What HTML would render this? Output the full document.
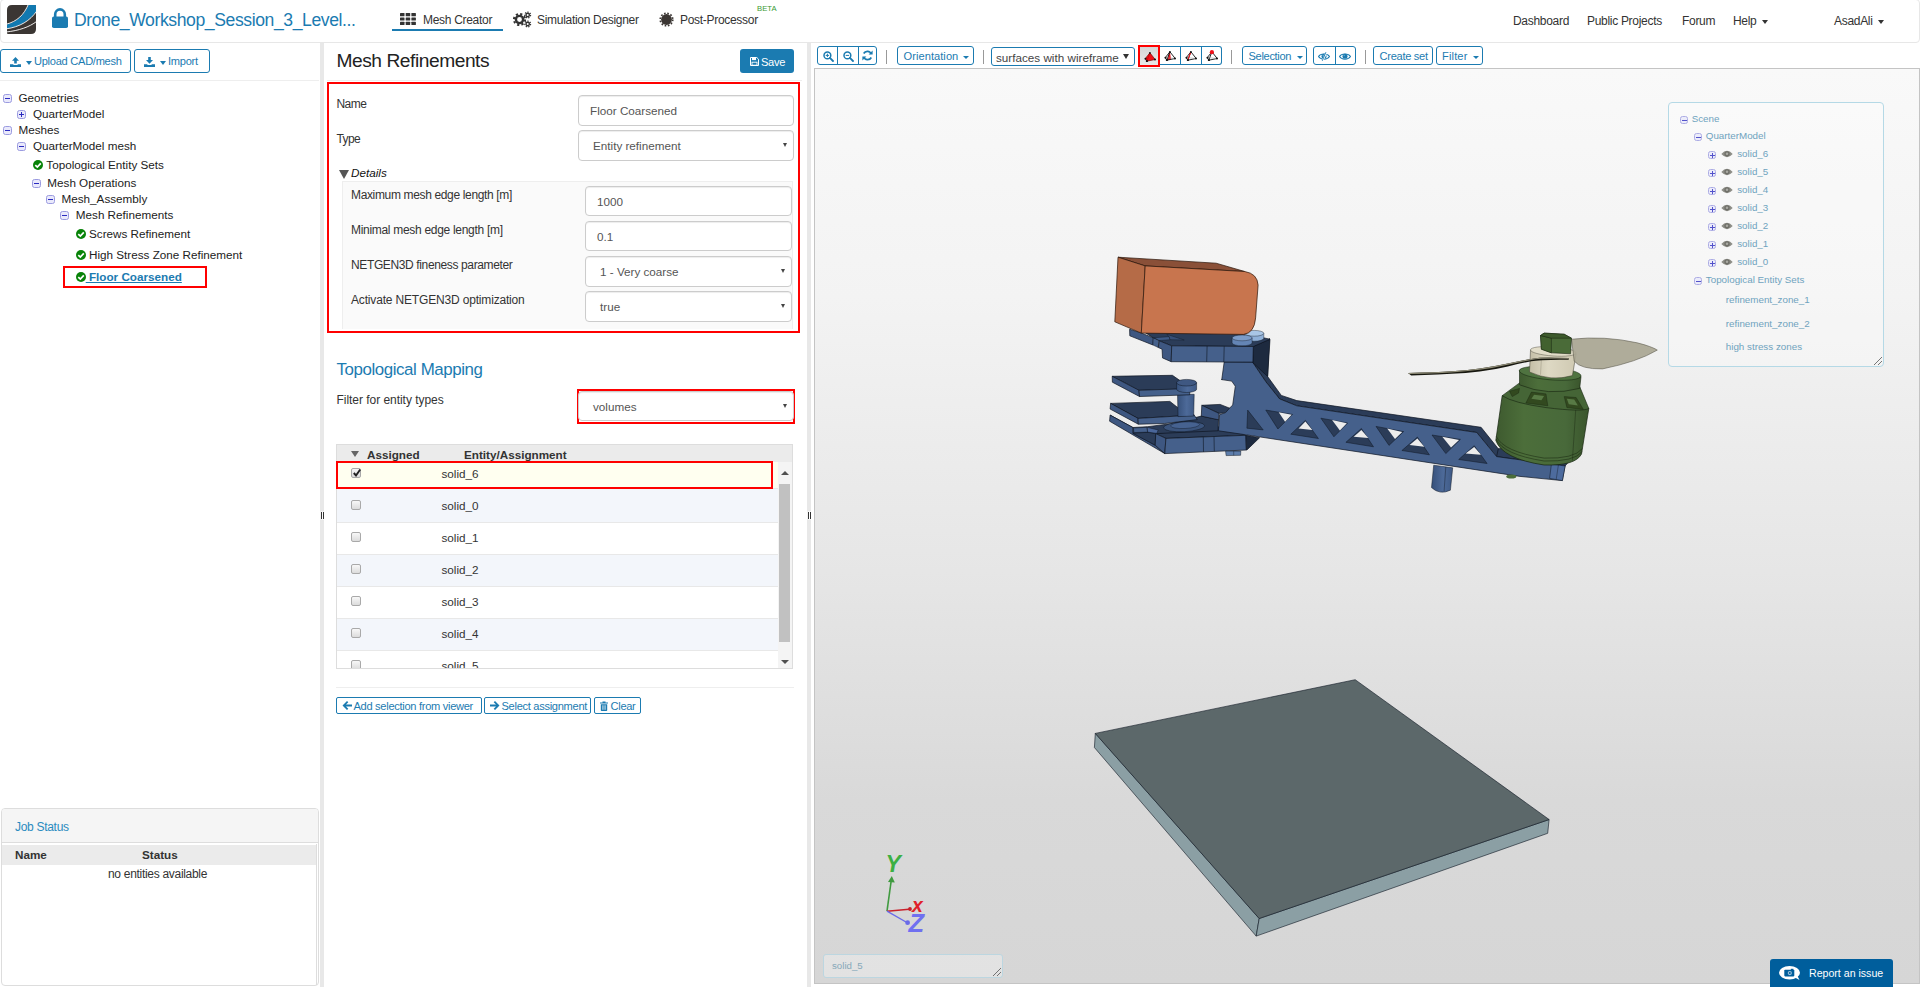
<!DOCTYPE html>
<html lang="en">
<head>
<meta charset="utf-8">
<title>Drone_Workshop_Session_3_Level - Mesh Creator</title>
<style>
*{box-sizing:border-box}
html,body{margin:0;padding:0}
body{width:1920px;height:987px;overflow:hidden;background:#fff;font-family:"Liberation Sans",sans-serif;font-size:13px;color:#333;position:relative}
.abs{position:absolute}
svg{display:block}
/* NAVBAR */
#nav{position:absolute;left:0;top:-1px;width:1920px;height:44px;background:#fff;border:1px solid #e7e7e7;border-radius:4px}
#nav .t{position:absolute;white-space:nowrap;color:#333;font-size:12px;letter-spacing:-0.3px;line-height:14px}
#nav>*{margin-left:-1px}
#title{position:absolute;left:74px;top:9px;font-size:17.6px;line-height:22px;color:#1b7bb1;white-space:nowrap;letter-spacing:-0.41px}
.caret{display:inline-block;width:0;height:0;border-left:3.5px solid transparent;border-right:3.5px solid transparent;border-top:4px solid currentColor;vertical-align:middle}
/* LEFT */
#left{position:absolute;left:0;top:43px;width:319px;height:944px;background:#fff}
.split{position:absolute;top:43px;width:4px;height:944px;background:#e8e8e8}
.split i{position:absolute;top:468.500px;height:7px;border-left:1px solid #333;border-right:1px solid #333;left:.5px;width:3.500px;background:#fff;box-shadow:0 0 0 .5px #fff}
.btn{position:absolute;border:1px solid #1b7bb1;border-radius:3px;color:#1b7bb1;background:#fff;font-size:11.1px;letter-spacing:-0.28px;white-space:nowrap;line-height:1}
.hr{position:absolute;height:1px;background:#eee}
.tree{position:absolute;font-size:11.7px;color:#222;white-space:nowrap;line-height:14px}
.tg{position:absolute;width:9px;height:9px;border:1px solid #9b9be0;border-radius:2.5px;background:#e9e9fb}
.tg:before{content:"";position:absolute;left:1px;top:3px;width:5px;height:1px;background:#2a2ac0}
.tg.p:after{content:"";position:absolute;left:3px;top:1px;width:1px;height:5px;background:#2a2ac0}
.ok{position:absolute;width:10px;height:10px;margin-left:.5px}

/* MIDDLE */
#mid{position:absolute;left:324px;top:43px;width:483px;height:944px;background:#fff}
.lab{position:absolute;font-size:12px;letter-spacing:-0.3px;color:#333;line-height:14px;white-space:nowrap}
.inp{position:absolute;border:1px solid #ccc;border-radius:4px;background:#fff;font-size:11.7px;color:#555;box-shadow:inset 0 1px 1px rgba(0,0,0,.075);white-space:nowrap}
.inp span{position:absolute;top:50%;margin-top:-6.1px;line-height:14px}
.inp b{position:absolute;right:6.200px;top:50%;margin-top:-2.500px;width:0;height:0;border-left:2.900px solid transparent;border-right:2.900px solid transparent;border-top:4.700px solid #444}
.sb{position:absolute;border:1px solid #1b7bb1;border-radius:2px;color:#1b7bb1;background:#fff;font-size:11.1px;letter-spacing:-0.3px;white-space:nowrap;line-height:16px;height:17px}
.row{position:absolute;left:13px;width:441px;height:32px;border-bottom:1px solid #e8e8e8;font-size:13px;color:#333}
.row span{position:absolute;left:104.500px;top:8px;line-height:14px;font-size:11.7px}
.cb{position:absolute;left:14px;top:9px;width:10px;height:10px;border:1px solid #a9a9a9;border-radius:2px;background:linear-gradient(#f8f8f8,#dcdcdc)}

/* VIEWER */
#tb{position:absolute;left:811px;top:43px;width:1109px;height:25px;background:#fff}
.tbb{position:absolute;top:3px;height:19px;border:1px solid #1b7bb1;border-radius:3px;background:#fff;color:#1b7bb1;font-size:11.1px;letter-spacing:-0.2px;line-height:17px;white-space:nowrap}
.tbb>span.abs:first-child{top:1px !important}
.tbb .d{position:absolute;top:0;width:1px;height:17px;background:#1b7bb1}
.pipe{position:absolute;top:6.500px;width:1px;height:14.500px;background:#999}
#cv{position:absolute;left:814px;top:68px;width:1106px;height:916px;border:1px solid #c4c4c4;background:linear-gradient(#f9f9f9 0%,#f3f3f3 25%,#e6e6e6 55%,#d9d9d9 80%,#d6d6d6 100%);overflow:hidden}
#scene{position:absolute;left:1668px;top:102px;width:216px;height:265px;border:1px solid #b5d9e6;border-radius:4px;background:rgba(255,255,255,.28)}
#scene div{position:absolute;font-size:9.8px;line-height:12px;color:#6fa3be;white-space:nowrap}
#scene .tg{opacity:.8;margin-top:1px}
.eye{position:absolute;width:12px;height:8px}
</style>
</head>
<body>

<!-- ================= NAVBAR ================= -->
<div id="nav">
  <svg class="abs" style="left:7px;top:5px" width="29" height="29" viewBox="0 0 29 29">
    <defs><clipPath id="lg"><path d="M5 0 H28 Q29 0 29 1 V24 Q29 29 24 29 H1 Q0 29 0 28 V5 Q0 0 5 0 Z"/></clipPath></defs>
    <g clip-path="url(#lg)">
      <rect width="29" height="29" fill="#3b3633"/>
      <path d="M-1 19.700 C10 17 17.500 10 21.900 -1 L30 -1 L30 5.300 C23 15.500 13 21.500 -1 23.500 Z" fill="#1179b0"/>
      <path d="M-1 19.300 C10 16.600 17.200 9.700 21.500 -1" fill="none" stroke="#fff" stroke-width=".9"/>
      <path d="M-1 23.900 C13 21.900 23 15.900 30 5.700" fill="none" stroke="#fff" stroke-width=".9"/>
      <path d="M-1 27 C12 25.600 22 22.200 30 16.200" fill="none" stroke="#fff" stroke-width=".9"/>
    </g>
  </svg>
  <svg class="abs" style="left:51px;top:8px" width="18" height="21" viewBox="0 0 18 21">
    <path d="M4.200 9 V6.200 A4.800 4.800 0 0 1 13.800 6.200 V9" fill="none" stroke="#1b7bb1" stroke-width="2.600"/>
    <rect x="1" y="8.500" width="16" height="11.500" rx="1.800" fill="#1b7bb1"/>
  </svg>
  <div id="title">Drone_Workshop_Session_3_Level...</div>

  <!-- workflow tabs -->
  <svg class="abs" style="left:400px;top:13px" width="16" height="12" viewBox="0 0 16 12" fill="#333">
    <rect x="0" y="0" width="4.500" height="3.200" rx=".5"/><rect x="5.700" y="0" width="4.500" height="3.200" rx=".5"/><rect x="11.400" y="0" width="4.500" height="3.200" rx=".5"/>
    <rect x="0" y="4.400" width="4.500" height="3.200" rx=".5"/><rect x="5.700" y="4.400" width="4.500" height="3.200" rx=".5"/><rect x="11.400" y="4.400" width="4.500" height="3.200" rx=".5"/>
    <rect x="0" y="8.800" width="4.500" height="3.200" rx=".5"/><rect x="5.700" y="8.800" width="4.500" height="3.200" rx=".5"/><rect x="11.400" y="8.800" width="4.500" height="3.200" rx=".5"/>
  </svg>
  <div class="t" style="left:423px;top:13px">Mesh Creator</div>
  <div class="abs" style="left:392px;top:29px;width:111px;height:2px;background:#1b7bb1"></div>

  <svg class="abs" style="left:513px;top:11px" width="19" height="17" viewBox="0 0 19 17">
    <g fill="none" stroke="#333">
      <circle cx="6.500" cy="8.500" r="3.600" stroke-width="2.400"/>
      <circle cx="6.500" cy="8.500" r="5.600" stroke-width="2" stroke-dasharray="2.200 2.200"/>
      <circle cx="14.700" cy="4" r="1.700" stroke-width="1.400"/>
      <circle cx="14.700" cy="4" r="2.900" stroke-width="1.200" stroke-dasharray="1.300 1.300"/>
      <circle cx="14.700" cy="13" r="1.700" stroke-width="1.400"/>
      <circle cx="14.700" cy="13" r="2.900" stroke-width="1.200" stroke-dasharray="1.300 1.300"/>
    </g>
  </svg>
  <div class="t" style="left:537px;top:13px">Simulation Designer</div>

  <svg class="abs" style="left:659px;top:12px" width="15" height="15" viewBox="0 0 15 15">
    <circle cx="7.500" cy="7.500" r="5.400" fill="#3b3633"/>
    <circle cx="7.500" cy="7.500" r="6.300" fill="none" stroke="#3b3633" stroke-width="1.600" stroke-dasharray="1.650 1.650"/>
  </svg>
  <div class="t" style="left:680px;top:13px">Post-Processor</div>
  <div class="abs" style="left:757px;top:4px;font-size:7.7px;line-height:9px;color:#3a9a33;letter-spacing:0">BETA</div>

  <div class="t" style="left:1513px;top:14px">Dashboard</div>
  <div class="t" style="left:1587px;top:14px">Public Projects</div>
  <div class="t" style="left:1682px;top:14px">Forum</div>
  <div class="t" style="left:1733px;top:14px">Help <span class="caret" style="margin-left:2px"></span></div>
  <div class="t" style="left:1834px;top:14px">AsadAli <span class="caret" style="margin-left:2px"></span></div>
</div>

<!-- ================= LEFT PANEL ================= -->
<div id="left">
  <div class="btn" style="left:0;top:6px;width:131px;height:24px">
    <svg class="abs" style="left:9px;top:7px" width="11" height="10" viewBox="0 0 11 10" fill="#1b7bb1"><path d="M5.500 0 L9 3.800 H6.800 V6.500 H4.200 V3.800 H2 Z"/><path d="M0 7.200 H3.400 V8 H7.600 V7.200 H11 V10 H0 Z"/></svg>
    <span class="caret abs" style="left:25px;top:11px"></span>
    <span class="abs" style="left:33px;top:6px">Upload CAD/mesh</span>
  </div>
  <div class="btn" style="left:134px;top:6px;width:76px;height:24px">
    <svg class="abs" style="left:9px;top:7px" width="11" height="10" viewBox="0 0 11 10" fill="#1b7bb1"><path d="M5.500 6.800 L9 3 H6.800 V0 H4.200 V3 H2 Z"/><path d="M0 7.200 H3.400 V8 H7.600 V7.200 H11 V10 H0 Z"/></svg>
    <span class="caret abs" style="left:25px;top:11px"></span>
    <span class="abs" style="left:33px;top:6px">Import</span>
  </div>
  <div class="hr" style="left:0;top:37px;width:319px"></div>
  <span class="tg" style="left:3px;top:50.5px"></span>
  <div class="tree" style="left:18.5px;top:48.0px">Geometries</div>
  <span class="tg p" style="left:17px;top:66.5px"></span>
  <div class="tree" style="left:33px;top:64.0px">QuarterModel</div>
  <span class="tg" style="left:3px;top:82.5px"></span>
  <div class="tree" style="left:18.5px;top:80.0px">Meshes</div>
  <span class="tg" style="left:17px;top:98.5px"></span>
  <div class="tree" style="left:33px;top:96.0px">QuarterModel mesh</div>
  <svg class="ok" style="left:32px;top:117.0px" viewBox="0 0 10 10"><circle cx="5" cy="5" r="5" fill="#088308"/><path d="M2.300 5.200 L4.300 7.100 L7.800 3.300" fill="none" stroke="#fff" stroke-width="1.700"/></svg>
  <div class="tree" style="left:46.3px;top:115.0px">Topological Entity Sets</div>
  <span class="tg" style="left:32px;top:135.5px"></span>
  <div class="tree" style="left:47.3px;top:133.0px">Mesh Operations</div>
  <span class="tg" style="left:46px;top:151.5px"></span>
  <div class="tree" style="left:61.5px;top:149.0px">Mesh_Assembly</div>
  <span class="tg" style="left:60px;top:167.5px"></span>
  <div class="tree" style="left:75.8px;top:165.0px">Mesh Refinements</div>
  <svg class="ok" style="left:75px;top:186.0px" viewBox="0 0 10 10"><circle cx="5" cy="5" r="5" fill="#088308"/><path d="M2.300 5.200 L4.300 7.100 L7.800 3.300" fill="none" stroke="#fff" stroke-width="1.700"/></svg>
  <div class="tree" style="left:89px;top:184.0px">Screws Refinement</div>
  <svg class="ok" style="left:75px;top:207.0px" viewBox="0 0 10 10"><circle cx="5" cy="5" r="5" fill="#088308"/><path d="M2.300 5.200 L4.300 7.100 L7.800 3.300" fill="none" stroke="#fff" stroke-width="1.700"/></svg>
  <div class="tree" style="left:89px;top:205.0px">High Stress Zone Refinement</div>
  <svg class="ok" style="left:75px;top:229.0px" viewBox="0 0 10 10"><circle cx="5" cy="5" r="5" fill="#088308"/><path d="M2.300 5.200 L4.300 7.100 L7.800 3.300" fill="none" stroke="#fff" stroke-width="1.700"/></svg>
  <div class="abs" style="left:63px;top:223px;width:144px;height:22px;border:2px solid #f00"></div>
  <div class="tree" style="left:85.7px;top:227.0px;font-weight:bold;color:#1b7bb1;text-decoration:underline">&nbsp;Floor Coarsened</div>
  <!-- Job status -->
  <div class="abs" style="left:1px;top:765px;width:318px;height:178px;border:1px solid #ddd;border-radius:4px;background:#fff"></div>
  <div class="abs" style="left:2px;top:766px;width:316px;height:34px;background:#f5f5f5;border-bottom:1px solid #ddd;border-radius:3px 3px 0 0"></div>
  <div class="abs" style="left:15px;top:777px;font-size:12px;letter-spacing:-0.3px;color:#2a8bc0;line-height:14px">Job Status</div>
  <div class="abs" style="left:2px;top:802px;width:315px;height:20px;background:#ebebeb"></div>
  <div class="abs" style="left:316px;top:801px;width:1px;height:141px;background:#ddd"></div>
  <div class="abs" style="left:15px;top:804.500px;font-size:11.7px;font-weight:bold;color:#333;line-height:14px">Name</div>
  <div class="abs" style="left:142px;top:804.500px;font-size:11.7px;font-weight:bold;color:#333;line-height:14px">Status</div>
  <div class="abs" style="left:108px;top:824px;font-size:12px;letter-spacing:-0.3px;color:#333;line-height:14px;white-space:nowrap">no entities available</div>
</div>

<!-- ================= MIDDLE PANEL ================= -->
<div id="mid">
  <div class="abs" style="left:12.500px;top:6px;font-size:19.2px;letter-spacing:-0.46px;line-height:24px;color:#222;white-space:nowrap">Mesh Refinements</div>
  <div class="abs" style="left:416px;top:6px;width:54px;height:24px;background:#1b7bb1;border-radius:3px;color:#fff;font-size:11.1px;letter-spacing:-0.28px;line-height:14px">
    <svg class="abs" style="left:10px;top:8px" width="9" height="9" viewBox="0 0 9 9"><path d="M.5 .5 H6.800 L8.500 2.200 V8.500 H.5 Z" fill="none" stroke="#fff" stroke-width="1"/><rect x="2" y=".5" width="4" height="2.600" fill="#fff"/><rect x="2" y="5.200" width="5" height="3" fill="none" stroke="#fff" stroke-width=".9"/></svg>
    <span class="abs" style="left:21px;top:5.500px">Save</span>
  </div>
  <div class="hr" style="left:3px;top:37px;width:475px"></div>

  <!-- red highlighted form -->
  <div class="abs" style="left:3px;top:39px;width:473px;height:251px;border:2px solid #f00"></div>
  <div class="lab" style="left:12.500px;top:54px;letter-spacing:-.55px">Name</div>
  <div class="inp" style="left:254px;top:52px;width:216px;height:31px"><span style="left:11px">Floor Coarsened</span></div>
  <div class="lab" style="left:12.500px;top:89px;letter-spacing:-.6px">Type</div>
  <div class="inp" style="left:254px;top:87px;width:216px;height:31px"><span style="left:14px">Entity refinement</span><b></b></div>

  <div class="abs" style="left:14.500px;top:126.500px;width:0;height:0;border-left:5.500px solid transparent;border-right:5.500px solid transparent;border-top:9px solid #555"></div>
  <div class="abs" style="left:27px;top:123px;font-size:11.7px;font-style:italic;color:#111;line-height:14px">Details</div>
  <div class="abs" style="left:18px;top:138px;width:451px;height:148px;background:#fafafa;border:1px solid #eee;border-bottom:none"></div>

  <div class="lab" style="left:27px;top:145px;letter-spacing:-.35px">Maximum mesh edge length [m]</div>
  <div class="inp" style="left:261px;top:143px;width:207px;height:30px"><span style="left:11px">1000</span></div>
  <div class="lab" style="left:27px;top:180px">Minimal mesh edge length [m]</div>
  <div class="inp" style="left:261px;top:178px;width:207px;height:30px"><span style="left:11px">0.1</span></div>
  <div class="lab" style="left:27px;top:215px;letter-spacing:-.37px">NETGEN3D fineness parameter</div>
  <div class="inp" style="left:261px;top:213px;width:207px;height:31px"><span style="left:14px">1 - Very coarse</span><b></b></div>
  <div class="lab" style="left:27px;top:250px;letter-spacing:-.17px">Activate NETGEN3D optimization</div>
  <div class="inp" style="left:261px;top:248px;width:207px;height:31px"><span style="left:14px">true</span><b></b></div>

  <!-- Topological mapping -->
  <div class="abs" style="left:12.500px;top:316px;font-size:16.9px;letter-spacing:-0.42px;line-height:22px;color:#1b7bb1;white-space:nowrap">Topological Mapping</div>
  <div class="lab" style="left:12.500px;top:350px;letter-spacing:-.04px">Filter for entity types</div>
  <div class="abs" style="left:253px;top:346px;width:218px;height:35px;border:2px solid #f00"></div>
  <div class="inp" style="left:254px;top:348px;width:216px;height:30px"><span style="left:14px">volumes</span><b></b></div>

  <!-- table -->
  <div class="abs" style="left:12px;top:401px;width:457px;height:225px;border:1px solid #ddd;background:#fff;overflow:hidden">
    <div class="abs" style="left:0;top:0;width:455px;height:17px;background:#ebebeb"></div>
    <div class="abs" style="left:14px;top:6px;width:0;height:0;border-left:4px solid transparent;border-right:4px solid transparent;border-top:6px solid #666"></div>
    <div class="abs" style="left:30px;top:3.200px;font-size:11.7px;font-weight:bold;line-height:14px;color:#333">Assigned</div>
    <div class="abs" style="left:127px;top:3.200px;font-size:11.7px;font-weight:bold;line-height:14px;color:#333">Entity/Assignment</div>
    <div class="abs" style="left:0;top:17px;width:441px;height:207px;overflow:hidden">
      <div class="row" style="left:0;top:0;height:27px;background:#fffff0"><i class="cb" style="top:6px"><svg class="abs" style="left:0;top:-1px" width="10" height="10" viewBox="0 0 10 10"><path d="M1.800 5 L4 7.500 L8.200 1.500" fill="none" stroke="#222" stroke-width="1.900"/></svg></i><span style="top:4.500px">solid_6</span></div>
      <div class="row" style="left:0;top:27px;height:34px;background:#f3f6fb"><i class="cb" style="top:11px"></i><span style="top:10px">solid_0</span></div>
      <div class="row" style="left:0;top:61px;background:#fff"><i class="cb"></i><span>solid_1</span></div>
      <div class="row" style="left:0;top:93px;background:#f3f6fb"><i class="cb"></i><span>solid_2</span></div>
      <div class="row" style="left:0;top:125px;background:#fff"><i class="cb"></i><span>solid_3</span></div>
      <div class="row" style="left:0;top:157px;background:#f3f6fb"><i class="cb"></i><span>solid_4</span></div>
      <div class="row" style="left:0;top:189px;background:#fff"><i class="cb"></i><span>solid_5</span></div>
    </div>
    <!-- scrollbar -->
    <div class="abs" style="left:441px;top:17px;width:14px;height:207px;background:#f4f4f4"></div>
    <div class="abs" style="left:442px;top:38.500px;width:11px;height:158px;background:#c1c1c1"></div>
    <div class="abs" style="left:443.500px;top:26px;width:0;height:0;border-left:4px solid transparent;border-right:4px solid transparent;border-bottom:4.500px solid #505050"></div>
    <div class="abs" style="left:443.500px;top:215px;width:0;height:0;border-left:4px solid transparent;border-right:4px solid transparent;border-top:4.500px solid #505050"></div>
  </div>
  <div class="abs" style="left:12px;top:418px;width:437px;height:28px;border:2px solid #f00"></div>

  <div class="hr" style="left:12px;top:644px;width:458px"></div>
  <div class="sb" style="left:12px;top:654px;width:146px">
    <svg class="abs" style="left:5px;top:3px" width="10" height="9" viewBox="0 0 10 9"><path d="M5 0 L6.300 1.300 L4 3.600 H10 V5.400 H4 L6.300 7.700 L5 9 L.5 4.500 Z" fill="#1b7bb1"/></svg>
    <span class="abs" style="left:16.500px;top:0">Add selection from viewer</span></div>
  <div class="sb" style="left:160px;top:654px;width:107px">
    <svg class="abs" style="left:5px;top:3px" width="10" height="9" viewBox="0 0 10 9"><path d="M5 0 L3.700 1.300 L6 3.600 H0 V5.400 H6 L3.700 7.700 L5 9 L9.500 4.500 Z" fill="#1b7bb1"/></svg>
    <span class="abs" style="left:16.500px;top:0">Select assignment</span></div>
  <div class="sb" style="left:270px;top:654px;width:47px">
    <svg class="abs" style="left:5px;top:2.500px" width="8" height="10" viewBox="0 0 8 10"><path d="M0 1.500 H2.500 V.5 H5.500 V1.500 H8 V2.600 H0 Z M.8 3.200 H7.200 V9.200 Q7.200 10 6.400 10 H1.600 Q.8 10 .8 9.200 Z" fill="#1b7bb1"/><path d="M2.700 4.300 V8.800 M4 4.300 V8.800 M5.300 4.300 V8.800" stroke="#fff" stroke-width=".6"/></svg>
    <span class="abs" style="left:15.500px;top:0">Clear</span></div>
</div>

<!-- ================= VIEWER ================= -->
<div id="tb">
  <div class="tbb" style="left:6px;width:60px">
    <div class="abs" style="left:0;top:0;width:19px;height:17px"><svg class="abs" style="left:4.500px;top:3.500px" width="11" height="11" viewBox="0 0 11 11"><circle cx="4.400" cy="4.400" r="3.400" fill="none" stroke="#1b7bb1" stroke-width="1.500"/><path d="M6.900 6.900 L10 10" stroke="#1b7bb1" stroke-width="1.800" stroke-linecap="round"/><path d="M2.700 4.400 H6.100 M4.400 2.700 V6.100" stroke="#1b7bb1" stroke-width="1"/></svg></div>
    <div class="d" style="left:19px"></div>
    <div class="abs" style="left:20px;top:0;width:19px;height:17px"><svg class="abs" style="left:4.500px;top:3.500px" width="11" height="11" viewBox="0 0 11 11"><circle cx="4.400" cy="4.400" r="3.400" fill="none" stroke="#1b7bb1" stroke-width="1.500"/><path d="M6.900 6.900 L10 10" stroke="#1b7bb1" stroke-width="1.800" stroke-linecap="round"/><path d="M2.700 4.400 H6.100" stroke="#1b7bb1" stroke-width="1"/></svg></div>
    <div class="d" style="left:39.500px"></div>
    <svg class="abs" style="left:44px;top:3px" width="11" height="11" viewBox="0 0 11 11"><path d="M9.300 4 A4.200 4.200 0 0 0 1.700 3.500" fill="none" stroke="#1b7bb1" stroke-width="1.700"/><path d="M10.600 .6 V4.600 H6.600 Z" fill="#1b7bb1"/><path d="M1.700 7 A4.200 4.200 0 0 0 9.300 7.500" fill="none" stroke="#1b7bb1" stroke-width="1.700"/><path d="M.4 10.400 V6.400 H4.400 Z" fill="#1b7bb1"/></svg>
  </div>
  <div class="pipe" style="left:75px"></div>
  <div class="tbb" style="left:86px;width:77px"><span class="abs" style="left:5.500px;top:0;letter-spacing:.05px">Orientation</span><span class="caret abs" style="left:65px;top:9px;border-left-width:3px;border-right-width:3px;border-top-width:3.500px"></span></div>
  <div class="pipe" style="left:172px"></div>
  <div class="tbb" style="left:180px;top:4px;width:144px;color:#444;font-size:11.7px;letter-spacing:0;line-height:17px"><span class="abs" style="left:4px;top:0.500px">surfaces with wireframe</span><span class="abs" style="left:131px;top:6px;width:0;height:0;border-left:3px solid transparent;border-right:3px solid transparent;border-top:5px solid #333"></span></div>
  <div class="tbb" style="left:349px;width:62px;border-radius:0 3px 3px 0;border-left:none">
    <div class="d" style="left:20px"></div><div class="d" style="left:41px"></div>
    <svg class="abs" style="left:4px;top:3px" width="12" height="11" viewBox="0 0 12 11"><path d="M5.900 1.800 L2.800 10.200 L7 9.400 Z" fill="#f01018"/><path d="M5.900 1.800 L1.300 7.600 L2.800 10.200 L11.200 8.500 Z M5.900 1.800 L2.800 10.200" fill="none" stroke="#111" stroke-width=".9" stroke-linejoin="round"/><path d="M1.300 7.600 L11.200 8.500" stroke="#999" stroke-width=".5"/><circle cx="5.900" cy="1.900" r=".9" fill="#111"/><circle cx="1.500" cy="7.700" r="1" fill="#111"/><circle cx="2.900" cy="10" r="1.100" fill="#111"/><circle cx="11" cy="8.500" r="1" fill="#111"/></svg>
    <svg class="abs" style="left:25px;top:3px" width="12" height="11" viewBox="0 0 12 11"><path d="M5.900 1.800 L1.300 7.600 L2.800 10.200 L11.200 8.500 Z M5.900 1.800 L2.800 10.200" fill="none" stroke="#111" stroke-width=".9" stroke-linejoin="round"/><path d="M1.300 7.600 L11.200 8.500" stroke="#999" stroke-width=".5"/><path d="M5.600 2.600 L3 9.600" stroke="#f01018" stroke-width="1.100"/><circle cx="5.900" cy="1.900" r=".9" fill="#111"/><circle cx="1.500" cy="7.700" r="1" fill="#111"/><circle cx="2.900" cy="10" r="1.100" fill="#111"/><circle cx="11" cy="8.500" r="1" fill="#111"/></svg>
    <svg class="abs" style="left:46px;top:3px" width="12" height="11" viewBox="0 0 12 11"><path d="M5.900 1.800 L1.300 7.600 L2.800 10.200 L11.200 8.500 Z M5.900 1.800 L2.800 10.200" fill="none" stroke="#111" stroke-width=".9" stroke-linejoin="round"/><path d="M1.300 7.600 L11.200 8.500" stroke="#999" stroke-width=".5"/><circle cx="5.900" cy="1.900" r=".9" fill="#111"/><circle cx="1.500" cy="7.700" r="1" fill="#111"/><circle cx="2.900" cy="10" r="1.100" fill="#111"/><circle cx="11" cy="8.500" r="1" fill="#111"/><circle cx="5.900" cy="2.200" r="2.100" fill="#f01018"/></svg>
  </div>
  <div class="abs" style="left:327px;top:2px;width:22px;height:22px;border:2px solid #f00;background:linear-gradient(#d6d6d6,#e9e9e9)"><svg class="abs" style="left:3.500px;top:4px" width="12" height="11" viewBox="0 0 12 11"><path d="M5.900 1.800 L1.300 7.600 L2.800 10.200 L11.200 8.500 Z" fill="#f01018"/><path d="M5.900 1.800 L1.300 7.600 L2.800 10.200 L11.200 8.500 Z" fill="none" stroke="#7a0a0a" stroke-width=".7" stroke-linejoin="round"/><path d="M5.900 1.800 L2.800 10.200" stroke="#a00" stroke-width=".5"/><circle cx="5.900" cy="1.900" r=".9" fill="#111"/><circle cx="1.500" cy="7.700" r="1" fill="#111"/><circle cx="2.900" cy="10" r="1.100" fill="#111"/><circle cx="11" cy="8.500" r="1" fill="#111"/></svg></div>
  <div class="pipe" style="left:420px"></div>
  <div class="tbb" style="left:431px;width:65px"><span class="abs" style="left:5.500px;top:0;letter-spacing:-.33px">Selection</span><span class="caret abs" style="left:54px;top:9px;border-left-width:3px;border-right-width:3px;border-top-width:3.500px"></span></div>
  <div class="tbb" style="left:502px;width:43px">
    <div class="abs" style="left:0;top:0;width:21px;height:17px"><svg class="abs" style="left:3.500px;top:4.500px" width="12" height="9" viewBox="0 0 12 9"><path d="M.5 4.600 C2.500 1.200 9.500 1.200 11.500 4.600 C9.500 8 2.500 8 .5 4.600 Z" fill="#fff" stroke="#1b7bb1" stroke-width="1.050"/><circle cx="6" cy="4.300" r="2.500" fill="#1b7bb1"/><circle cx="5.200" cy="3.500" r=".8" fill="#5ea4cc"/><path d="M8.600 -.2 L4.400 9.200" stroke="#fff" stroke-width="1.700"/><path d="M7.900 .2 L4.300 8.800" stroke="#1b7bb1" stroke-width=".9"/></svg></div>
    <div class="d" style="left:20.500px"></div>
    <div class="abs" style="left:21px;top:0;width:21px;height:17px"><svg class="abs" style="left:3.500px;top:4.500px" width="12" height="9" viewBox="0 0 12 9"><path d="M.5 4.600 C2.500 1.200 9.500 1.200 11.500 4.600 C9.500 8 2.500 8 .5 4.600 Z" fill="#fff" stroke="#1b7bb1" stroke-width="1.050"/><circle cx="6" cy="4.300" r="2.500" fill="#1b7bb1"/><circle cx="5.200" cy="3.500" r=".8" fill="#5ea4cc"/></svg></div>
  </div>
  <div class="pipe" style="left:554px"></div>
  <div class="tbb" style="left:562px;width:60px"><span class="abs" style="left:5.500px;top:0;letter-spacing:-.29px">Create set</span></div>
  <div class="tbb" style="left:625px;width:47px"><span class="abs" style="left:5px;top:0;letter-spacing:.14px">Filter</span><span class="caret abs" style="left:35.500px;top:9px;border-left-width:3px;border-right-width:3px;border-top-width:3.500px"></span></div>
</div>
<div id="cv">
<!--MODEL-START-->
<svg class="abs" style="left:-815px;top:-69px" width="1920" height="987" viewBox="0 0 1920 987">
<polygon points="1095.3,733.4 1259.2,918.5 1256.2,936.1 1094.4,747.5" fill="#8b9fa4" stroke="#0e1622" stroke-width="0.6" stroke-linejoin="round" />
<polygon points="1259.2,918.5 1549.1,819.5 1547.7,833.3 1256.2,936.1" fill="#8b9fa4" stroke="#0e1622" stroke-width="0.6" stroke-linejoin="round" />
<polygon points="1095.3,733.4 1355.2,679.7 1549.1,819.5 1259.2,918.5" fill="#5c686a" stroke="#0e1622" stroke-width="0.6" stroke-linejoin="round" />
<defs><linearGradient id="cyl" x1="0" x2="1"><stop offset="0" stop-color="#36507a"/><stop offset=".55" stop-color="#4d6a99"/><stop offset="1" stop-color="#3e5985"/></linearGradient></defs>
<polygon points="1155.7,433.6 1217.5,426.7 1231.7,429.8 1245.9,435.3 1165.9,438.4" fill="#2b3c58" stroke="#0e1622" stroke-width="0.7" stroke-linejoin="round" />
<polygon points="1110.1,415.1 1132.9,427.5 1147.6,426.7 1170.9,423.7 1201.3,416.1 1218.5,419.6 1218.0,430.8 1155.7,433.6 1155.2,445.2 1132.9,433.3" fill="#2b3c58" stroke="#0e1622" stroke-width="0.7" stroke-linejoin="round" />
<polygon points="1110.1,415.1 1132.9,427.5 1132.9,433.3 1155.2,445.2 1164.8,453.6 1109.6,421.2" fill="#3e5781" stroke="#0e1622" stroke-width="0.7" stroke-linejoin="round" />
<polygon points="1132.9,433.3 1147.6,432.3 1155.7,433.6 1155.2,445.2" fill="#2b3c58" stroke="#0e1622" stroke-width="0.5" stroke-linejoin="round" />
<polygon points="1133.4,428.0 1147.1,427.3 1147.6,432.1 1133.9,432.6" fill="#45608b" stroke="#0e1622" stroke-width="0.5" stroke-linejoin="round" />
<polygon points="1147.1,427.3 1158.3,430.0 1156.7,433.4 1147.6,432.1" fill="#4a669a" stroke="#0e1622" stroke-width="0.5" stroke-linejoin="round" />
<polygon points="1155.7,433.6 1165.9,438.4 1164.8,453.6 1155.2,445.2" fill="#3e5781" stroke="#0e1622" stroke-width="0.7" stroke-linejoin="round" />
<polygon points="1165.9,438.4 1245.9,435.3 1246.4,450.0 1164.8,453.6" fill="#45608b" stroke="#0e1622" stroke-width="0.7" stroke-linejoin="round" />
<polygon points="1245.9,435.3 1259.6,437.7 1246.9,450.0 1246.4,450.0" fill="#1d2a3f" stroke="#0e1622" stroke-width="0.7" stroke-linejoin="round" />
<polyline points="1203.3,437.1 1203.5,451.9" fill="none" stroke="#0e1622" stroke-width="0.6"/>
<polyline points="1214.0,436.7 1214.3,451.4" fill="none" stroke="#0e1622" stroke-width="0.6"/>
<ellipse cx="1184.1" cy="426.7" rx="20.500" ry="5" fill="#3b547c" stroke="#0e1622" stroke-width=".5" transform="rotate(-3 1184.1 426.7)"/>
<ellipse cx="1185.1" cy="425.2" rx="14.500" ry="3.300" fill="#466290" stroke="#0e1622" stroke-width=".4" transform="rotate(-3 1185.1 425.2)"/>
<polygon points="1225.6,451.1 1240.8,451.1 1240.6,455.3 1226.1,455.6" fill="#5d7dab" stroke="#0e1622" stroke-width="0.5" stroke-linejoin="round" />
<polyline points="1233.7,451.1 1233.7,455.4" fill="none" stroke="#0e1622" stroke-width="0.4"/>
<polygon points="1201.8,405.3 1220.1,404.4 1231.7,409.0 1225.6,412.6 1219.0,413.4" fill="#2b3c58" stroke="#0e1622" stroke-width="0.7" stroke-linejoin="round" />
<polygon points="1201.8,405.3 1219.0,413.4 1218.5,419.8 1201.3,416.1" fill="#3e5781" stroke="#0e1622" stroke-width="0.7" stroke-linejoin="round" />
<polygon points="1110.6,403.4 1169.9,401.4 1177.0,407.0 1194.2,415.1 1138.0,418.4" fill="#2b3c58" stroke="#0e1622" stroke-width="0.7" stroke-linejoin="round" />
<polygon points="1110.6,403.4 1138.0,418.4 1138.3,424.2 1110.1,409.0" fill="#3e5781" stroke="#0e1622" stroke-width="0.7" stroke-linejoin="round" />
<polygon points="1138.0,418.4 1194.2,415.1 1197.3,419.6 1164.8,423.5 1138.3,424.2" fill="#45608b" stroke="#0e1622" stroke-width="0.7" stroke-linejoin="round" />
<polygon points="1177.5,394.3 1194.2,394.3 1193.7,416.1 1178.0,416.6" fill="url(#cyl)" stroke="#0e1622" stroke-width="0.5" stroke-linejoin="round" />
<polygon points="1112.2,376.3 1172.4,375.3 1180.0,380.6 1177.5,389.3 1139.0,390.3" fill="#2b3c58" stroke="#0e1622" stroke-width="0.7" stroke-linejoin="round" />
<polygon points="1112.2,376.3 1139.0,390.3 1139.5,396.5 1112.4,382.2" fill="#3e5781" stroke="#0e1622" stroke-width="0.7" stroke-linejoin="round" />
<polygon points="1139.0,390.3 1189.7,388.5 1189.7,394.8 1139.5,396.5" fill="#45608b" stroke="#0e1622" stroke-width="0.7" stroke-linejoin="round" />
<path d="M1176.6,382.7 v6.500 a10,3.300 0 0 0 20,0 v-6.500 Z" fill="url(#cyl)" stroke="#0e1622" stroke-width=".5"/>
<ellipse cx="1186.6" cy="382.7" rx="10" ry="3.300" fill="#3f5882" stroke="#0e1622" stroke-width=".5"/>
<polygon points="1269.3,338.6 1267.6,376.5 1281.3,395.4 1296.8,400.6 1481.1,427.3 1498.3,448.8 1509.5,458.7 1496.6,456.6 1476.8,432.5 1296.8,405.8 1279.6,398.9 1265.8,381.7 1252.9,362.7 1253.3,346.5 1270.0,339.2" fill="#2b3c58" stroke="#0e1622" stroke-width="0.7" stroke-linejoin="round" />
<polygon points="1498.3,448.8 1496.6,456.6 1565.1,466.0 1569.7,460.5 1509.5,447.7" fill="#2b3c58" stroke="#0e1622" stroke-width="0.7" stroke-linejoin="round" />
<polygon points="1224.2,362.0 1252.9,362.1 1252.9,362.7 1265.8,381.7 1279.6,398.9 1296.8,405.8 1476.8,432.5 1496.6,456.6 1565.1,466.0 1562.4,480.6 1520.0,476.4 1245.9,434.8 1218.5,430.8 1219.6,414.6 1225.6,412.6 1229.7,408.0 1232.7,405.0 1235.3,386.2 1231.7,381.1 1221.6,379.6 1221.7,380.0" fill="#45608b" stroke="#0e1622" stroke-width="0.7" stroke-linejoin="round" />
<polygon points="1551.4,464.1 1565.1,466.0 1562.4,480.6 1549.6,478.4" fill="#4d6b9e" stroke="#0e1622" stroke-width="0.5" stroke-linejoin="round" />
<polyline points="1558.4,465.0 1556.2,479.5" fill="none" stroke="#0e1622" stroke-width="0.4"/>
<polygon points="1253.3,346.5 1270.0,339.2 1267.6,376.5 1252.9,362.7 1252.9,362.1" fill="#1d2a3f" stroke="#0e1622" stroke-width="0.7" stroke-linejoin="round" />
<path d="M1433.7,465.2 L1452.7,467.8 L1450.4,490.2 Q1439.8,495.3 1431.5,487.6 Z" fill="url(#cyl)" stroke="#0e1622" stroke-width="0.5" stroke-linejoin="round" />
<polyline points="1445.8,466.9 1444.1,491.0" fill="none" stroke="#0e1622" stroke-width="0.4"/>
<polygon points="1247.7,410.1 1263.2,429.9 1246.9,428.2" fill="#2b3c58" stroke="#0e1622" stroke-width="0.5" stroke-linejoin="round" />
<polygon points="1265.8,410.1 1292.5,414.4 1277.9,429.0" fill="#2b3c58" stroke="#0e1622" stroke-width="0.5" stroke-linejoin="round" />
<polygon points="1278.7,412.3 1291.7,414.7 1285.1,421.8" fill="#ececec" stroke="none" stroke-width="0" stroke-linejoin="round" />
<polygon points="1305.4,420.4 1318.4,438.5 1290.8,434.2" fill="#2b3c58" stroke="#0e1622" stroke-width="0.5" stroke-linejoin="round" />
<polygon points="1305.4,421.6 1312.3,429.9 1298.6,428.5" fill="#ececec" stroke="none" stroke-width="0" stroke-linejoin="round" />
<polygon points="1320.9,418.2 1347.6,423.0 1333.9,436.8" fill="#2b3c58" stroke="#0e1622" stroke-width="0.5" stroke-linejoin="round" />
<polygon points="1332.1,420.1 1346.8,423.3 1339.9,430.4" fill="#ececec" stroke="none" stroke-width="0" stroke-linejoin="round" />
<polygon points="1361.4,428.5 1373.5,446.8 1345.9,442.3" fill="#2b3c58" stroke="#0e1622" stroke-width="0.5" stroke-linejoin="round" />
<polygon points="1361.4,429.9 1368.3,438.1 1353.7,436.8" fill="#ececec" stroke="none" stroke-width="0" stroke-linejoin="round" />
<polygon points="1376.0,426.4 1403.6,431.6 1389.0,445.4" fill="#2b3c58" stroke="#0e1622" stroke-width="0.5" stroke-linejoin="round" />
<polygon points="1387.2,428.5 1402.2,431.9 1395.0,439.0" fill="#ececec" stroke="none" stroke-width="0" stroke-linejoin="round" />
<polygon points="1417.4,437.1 1429.4,454.8 1401.9,450.5" fill="#2b3c58" stroke="#0e1622" stroke-width="0.5" stroke-linejoin="round" />
<polygon points="1417.4,438.5 1424.3,446.8 1409.6,445.0" fill="#ececec" stroke="none" stroke-width="0" stroke-linejoin="round" />
<polygon points="1432.0,435.0 1460.4,439.4 1445.8,453.6" fill="#2b3c58" stroke="#0e1622" stroke-width="0.5" stroke-linejoin="round" />
<polygon points="1442.3,436.8 1459.0,439.9 1451.0,447.6" fill="#ececec" stroke="none" stroke-width="0" stroke-linejoin="round" />
<polygon points="1474.2,445.7 1487.1,463.5 1458.7,459.5" fill="#2b3c58" stroke="#0e1622" stroke-width="0.5" stroke-linejoin="round" />
<polygon points="1474.2,447.1 1481.1,454.8 1465.6,453.6" fill="#ececec" stroke="none" stroke-width="0" stroke-linejoin="round" />
<polygon points="1129.6,329.2 1141.2,332.9 1153.3,337.9 1152.9,345.0 1129.8,335.8" fill="#3e5781" stroke="#0e1622" stroke-width="0.7" stroke-linejoin="round" />
<polygon points="1145.0,332.5 1245.0,333.8 1270.0,339.2 1253.3,346.5 1171.7,345.8 1159.2,340.8 1153.3,337.9" fill="#2b3c58" stroke="#0e1622" stroke-width="0.7" stroke-linejoin="round" />
<polygon points="1153.3,337.9 1158.8,340.4 1158.3,347.5 1152.9,345.0" fill="#45608b" stroke="#0e1622" stroke-width="0.5" stroke-linejoin="round" />
<polygon points="1154.2,337.7 1169.2,336.7 1170.0,339.7 1159.0,340.5" fill="#3f5a86" stroke="#0e1622" stroke-width="0.4" stroke-linejoin="round" />
<polygon points="1166.7,334.3 1184.2,340.0 1170.0,339.7 1169.2,336.7" fill="#384f77" stroke="#0e1622" stroke-width="0.4" stroke-linejoin="round" />
<polygon points="1159.2,340.8 1171.7,345.8 1171.2,361.7 1162.5,357.9 1162.1,349.2 1158.3,347.5" fill="#3e5781" stroke="#0e1622" stroke-width="0.7" stroke-linejoin="round" />
<polygon points="1171.7,345.8 1253.3,346.5 1252.9,362.1 1171.2,361.7" fill="#45608b" stroke="#0e1622" stroke-width="0.7" stroke-linejoin="round" />
<polyline points="1207.1,346.0 1206.7,361.8" fill="none" stroke="#0e1622" stroke-width="0.6"/>
<polyline points="1224.2,346.2 1223.8,362.0" fill="none" stroke="#0e1622" stroke-width="0.6"/>
<path d="M1244.6,333.3 v5 a9.600,2.900 0 0 0 19.200,0 v-5 Z" fill="#8fb0d8" stroke="#0e1622" stroke-width=".4"/>
<ellipse cx="1254.2" cy="333.3" rx="9.600" ry="2.900" fill="#a9c6e6" stroke="#0e1622" stroke-width=".4"/>
<path d="M1232.1,337.9 v5 a10,2.900 0 0 0 20,0 v-5 Z" fill="#6485b5" stroke="#0e1622" stroke-width=".4"/>
<ellipse cx="1242.1" cy="337.9" rx="10" ry="2.900" fill="#7c9cc9" stroke="#0e1622" stroke-width=".4"/>
<polygon points="1118.0,257.2 1216.1,263.2 1244.7,271.5 1145.2,265.9" fill="#8a5038" stroke="#2a1408" stroke-width="0.7" stroke-linejoin="round" />
<polygon points="1118.0,257.2 1145.2,265.9 1141.3,333.1 1114.8,321.8" fill="#b56b47" stroke="#2a1408" stroke-width="0.7" stroke-linejoin="round" />
<path d="M1145.2,265.9 L1244.7,271.5 Q1257.4,273.6 1258.1,285.1 L1255.6,317.9 Q1254.4,333.1 1243.5,334.4 L1141.3,333.1 Z" fill="#c8754e" stroke="#2a1408" stroke-width="0.7" stroke-linejoin="round" />
<defs><linearGradient id="grn" x1="0" x2="1"><stop offset="0" stop-color="#3e5a2f"/><stop offset=".3" stop-color="#4c6e3a"/><stop offset=".75" stop-color="#48693a"/><stop offset="1" stop-color="#3a552c"/></linearGradient><linearGradient id="bei" x1="0" x2="1"><stop offset="0" stop-color="#c4bea6"/><stop offset=".4" stop-color="#ded9c4"/><stop offset="1" stop-color="#cfc9b2"/></linearGradient></defs>
<ellipse cx="1511.3" cy="476.5" rx="5" ry="2" fill="#4c6e3a"/>
<path d="M1502.2,395.7 L1495.8,440.4 Q1502.2,458.7 1544.1,465.0 Q1575.2,466.0 1581.5,454.1 L1588.8,408.5 Q1575.2,403.0 1546.0,400.3 Q1514.9,396.6 1502.2,395.7 Z" fill="url(#grn)" stroke="#16240f" stroke-width="0.7" stroke-linejoin="round" />
<path d="M1496.2,436.2 Q1503.1,451.7 1544.1,458.1 Q1574.2,459.0 1582.3,448.6" fill="none" stroke="#16240f" stroke-width="0.5" stroke-linejoin="round" />
<path d="M1496.2,439.1 Q1503.1,454.6 1544.1,461.0 Q1574.2,461.9 1582.3,451.5" fill="none" stroke="#16240f" stroke-width="0.5" stroke-linejoin="round" />
<polyline points="1576.1,403.9 1572.4,460.5" fill="none" stroke="#16240f" stroke-width="0.4"/>
<path d="M1502.2,395.7 L1519.5,382.9 Q1546.0,393.0 1579.7,386.6 L1588.8,408.5 Q1582.4,412.1 1546.0,407.6 Q1513.1,403.0 1502.2,395.7 Z" fill="#456536" stroke="#16240f" stroke-width="0.6" stroke-linejoin="round" />
<polygon points="1531.4,392.1 1546.0,393.9 1547.8,405.8 1525.9,403.0" fill="#32491f" stroke="#16240f" stroke-width="0.4" stroke-linejoin="round" />
<polygon points="1534.1,394.8 1544.1,395.9 1541.4,400.3 1531.4,398.8" fill="#587a45" stroke="none" stroke-width="0" stroke-linejoin="round" />
<polygon points="1564.2,396.6 1576.1,397.5 1583.4,409.4 1566.9,407.6" fill="#32491f" stroke="#16240f" stroke-width="0.4" stroke-linejoin="round" />
<polygon points="1566.9,398.8 1574.2,399.5 1577.9,405.4 1568.8,404.3" fill="#587a45" stroke="none" stroke-width="0" stroke-linejoin="round" />
<polygon points="1509.5,391.2 1519.5,388.4 1518.6,393.0 1512.2,396.6" fill="#32491f" stroke="#16240f" stroke-width="0.4" stroke-linejoin="round" />
<path d="M1519.5,370.2 L1519.5,384.8 Q1547.8,396.6 1579.7,388.4 L1581.0,376.6 Q1547.8,384.8 1519.5,370.2 Z" fill="url(#grn)" stroke="#16240f" stroke-width="0.6" stroke-linejoin="round" />
<ellipse cx="1550.2" cy="373.3" rx="31" ry="6.500" fill="#4f7340" stroke="#16240f" stroke-width=".5" transform="rotate(5 1550.2 373.3)"/>
<path d="M1530.5,350.1 L1529.5,372.0 Q1551.4,382.0 1572.4,375.6 L1576.1,353.8 Z" fill="url(#bei)" stroke="#3a382c" stroke-width="0.5" stroke-linejoin="round" />
<ellipse cx="1553.3" cy="351.4" rx="22.900" ry="4.600" fill="#e2ddc9" stroke="#3a382c" stroke-width=".4" transform="rotate(4 1553.3 351.4)"/>
<polyline points="1541.4,359.2 1540.5,374.7" fill="none" stroke="#8a8672" stroke-width="0.4"/>
<path d="M1571.5,339.2 Q1604.3,335.5 1637.2,342.8 Q1651.8,346.5 1657.3,350.1 Q1637.2,362.0 1602.5,368.9 Q1580.6,369.3 1574.2,361.1 Z" fill="#a9a693" stroke="#4a483c" stroke-width="0.5" stroke-linejoin="round" fill-opacity=".92"/>
<polygon points="1540.5,335.5 1544.1,333.1 1564.2,334.2 1571.5,338.2 1570.6,353.8 1551.4,352.8 1541.4,349.2" fill="#4a6b38" stroke="#16240f" stroke-width="0.6" stroke-linejoin="round" />
<polygon points="1540.5,335.5 1551.4,338.2 1551.4,352.8 1541.4,349.2" fill="#42612f" stroke="#16240f" stroke-width="0.5" stroke-linejoin="round" />
<polygon points="1540.5,335.5 1544.1,333.1 1564.2,334.2 1571.5,338.2 1551.4,338.2" fill="#3d5a2c" stroke="#16240f" stroke-width="0.5" stroke-linejoin="round" />
<path d="M1408.0,373.0 Q1437.5,372.3 1451.5,371.3 Q1465.6,370.2 1479.7,368.4 Q1493.7,366.7 1507.8,363.6 Q1521.8,360.4 1531.2,358.9 Q1540.6,357.3 1554.6,357.7 L1568.7,358.0 L1568.7,359.7 Q1540.6,359.3 1531.2,361.2 Q1521.8,363.1 1507.8,366.4 Q1493.7,369.8 1479.7,371.4 Q1465.6,373.1 1451.5,373.8 Q1437.5,374.6 1424.4,375.0 L1411.2,375.4 Z" fill="#17170f" stroke="none" stroke-width="0" stroke-linejoin="round" />
<path d="M1408.0,373.0 Q1437.5,372.3 1451.5,371.3 Q1465.6,370.2 1479.7,368.4 Q1493.7,366.7 1507.8,363.6 Q1521.8,360.4 1531.2,358.9 Q1540.6,357.3 1554.6,357.7 L1568.7,358.0 L1568.7,358.7 Q1540.6,358.2 1531.2,359.9 Q1521.8,361.6 1507.8,364.8 Q1493.7,368.1 1479.7,369.8 Q1465.6,371.5 1451.5,372.4 Q1437.5,373.4 1423.4,373.7 L1409.4,374.1 Z" fill="#8f8c77" stroke="none" stroke-width="0" stroke-linejoin="round" />
</svg>
<!--MODEL-END-->
</div>
<div id="scene">
  <span class="tg" style="left:10.5px;top:11.8px;width:8px;height:8px"></span>
  <div style="left:22.7px;top:9.8px">Scene</div>
  <span class="tg" style="left:25.0px;top:28.8px;width:8px;height:8px"></span>
  <div style="left:36.8px;top:26.8px">QuarterModel</div>
  <span class="tg p" style="left:39.4px;top:47.0px;width:8px;height:8px"></span>
  <svg class="eye" style="left:52.0px;top:46.5px" viewBox="0 0 12 8"><path d="M.3 4 Q6 -2.400 11.700 4 Q6 10.400 .3 4 Z" fill="#8d8d86"/><circle cx="6" cy="3.800" r="2.600" fill="#6f6f68"/><circle cx="6" cy="3.800" r="1.300" fill="#a9a9a2"/></svg>
  <div style="left:68.2px;top:45.0px">solid_6</div>
  <span class="tg p" style="left:39.4px;top:65.0px;width:8px;height:8px"></span>
  <svg class="eye" style="left:52.0px;top:64.5px" viewBox="0 0 12 8"><path d="M.3 4 Q6 -2.400 11.700 4 Q6 10.400 .3 4 Z" fill="#8d8d86"/><circle cx="6" cy="3.800" r="2.600" fill="#6f6f68"/><circle cx="6" cy="3.800" r="1.300" fill="#a9a9a2"/></svg>
  <div style="left:68.2px;top:63.0px">solid_5</div>
  <span class="tg p" style="left:39.4px;top:83.0px;width:8px;height:8px"></span>
  <svg class="eye" style="left:52.0px;top:82.5px" viewBox="0 0 12 8"><path d="M.3 4 Q6 -2.400 11.700 4 Q6 10.400 .3 4 Z" fill="#8d8d86"/><circle cx="6" cy="3.800" r="2.600" fill="#6f6f68"/><circle cx="6" cy="3.800" r="1.300" fill="#a9a9a2"/></svg>
  <div style="left:68.2px;top:81.0px">solid_4</div>
  <span class="tg p" style="left:39.4px;top:101.0px;width:8px;height:8px"></span>
  <svg class="eye" style="left:52.0px;top:100.5px" viewBox="0 0 12 8"><path d="M.3 4 Q6 -2.400 11.700 4 Q6 10.400 .3 4 Z" fill="#8d8d86"/><circle cx="6" cy="3.800" r="2.600" fill="#6f6f68"/><circle cx="6" cy="3.800" r="1.300" fill="#a9a9a2"/></svg>
  <div style="left:68.2px;top:99.0px">solid_3</div>
  <span class="tg p" style="left:39.4px;top:119.0px;width:8px;height:8px"></span>
  <svg class="eye" style="left:52.0px;top:118.5px" viewBox="0 0 12 8"><path d="M.3 4 Q6 -2.400 11.700 4 Q6 10.400 .3 4 Z" fill="#8d8d86"/><circle cx="6" cy="3.800" r="2.600" fill="#6f6f68"/><circle cx="6" cy="3.800" r="1.300" fill="#a9a9a2"/></svg>
  <div style="left:68.2px;top:117.0px">solid_2</div>
  <span class="tg p" style="left:39.4px;top:137.0px;width:8px;height:8px"></span>
  <svg class="eye" style="left:52.0px;top:136.5px" viewBox="0 0 12 8"><path d="M.3 4 Q6 -2.400 11.700 4 Q6 10.400 .3 4 Z" fill="#8d8d86"/><circle cx="6" cy="3.800" r="2.600" fill="#6f6f68"/><circle cx="6" cy="3.800" r="1.300" fill="#a9a9a2"/></svg>
  <div style="left:68.2px;top:135.0px">solid_1</div>
  <span class="tg p" style="left:39.4px;top:155.0px;width:8px;height:8px"></span>
  <svg class="eye" style="left:52.0px;top:154.5px" viewBox="0 0 12 8"><path d="M.3 4 Q6 -2.400 11.700 4 Q6 10.400 .3 4 Z" fill="#8d8d86"/><circle cx="6" cy="3.800" r="2.600" fill="#6f6f68"/><circle cx="6" cy="3.800" r="1.300" fill="#a9a9a2"/></svg>
  <div style="left:68.2px;top:153.0px">solid_0</div>
  <span class="tg" style="left:25.0px;top:172.8px;width:8px;height:8px"></span>
  <div style="left:36.8px;top:170.8px">Topological Entity Sets</div>
  <div style="left:56.8px;top:191.0px">refinement_zone_1</div>
  <div style="left:56.8px;top:214.8px">refinement_zone_2</div>
  <div style="left:56.8px;top:237.8px">high stress zones</div>
  <svg class="abs" style="right:1px;bottom:1px" width="8" height="8" viewBox="0 0 8 8"><path d="M0 8 L8 0 M4 8 L8 4" stroke="#555" stroke-width=".8"/></svg>
</div>
<!-- axes -->
<svg class="abs" style="left:870px;top:850px" width="70" height="95" viewBox="870 850 70 95">
  <path d="M887 911.2 L891.3 880" stroke="#3f9a3f" stroke-width="1.600"/><path d="M888 882 L891.800 876 L894.800 882.500 Z" fill="#3f9a3f"/>
  <path d="M887 911.2 L909 909.200" stroke="#c8202a" stroke-width="1.400"/><circle cx="910" cy="909" r="1.900" fill="#c8202a"/>
  <path d="M887 911.2 L906 922" stroke="#6a6ae8" stroke-width="1.400"/><circle cx="907.600" cy="922.700" r="2.400" fill="#6a6ae8"/>
  <text x="885.500" y="871.700" font-family="Liberation Sans, sans-serif" font-size="23" font-weight="bold" font-style="italic" fill="#3cb043">Y</text>
  <text x="912" y="911.500" font-family="Liberation Sans, sans-serif" font-size="19.500" font-weight="bold" font-style="italic" fill="#e0202a">x</text>
  <text x="908.500" y="932.400" font-family="Liberation Sans, sans-serif" font-size="25.500" font-weight="bold" font-style="italic" fill="#7070f0">Z</text>
</svg>
<!-- info textarea -->
<div class="abs" style="left:823px;top:953.500px;width:180px;height:24px;border:1px solid #bcd6e0;border-radius:3px;background:rgba(255,255,255,.3)">
  <span class="abs" style="left:8px;top:5px;font-size:9.7px;line-height:12px;color:#86a8b9">solid_5</span>
  <svg class="abs" style="right:1px;bottom:1px" width="8" height="8" viewBox="0 0 8 8"><path d="M0 8 L8 0 M4 8 L8 4" stroke="#555" stroke-width=".8"/></svg>
</div>
<!-- report -->
<div class="abs" style="left:1770px;top:959px;width:123px;height:28px;background:#005e9c;border-radius:3px 3px 0 0">
  <svg class="abs" style="left:9px;top:7px" width="22" height="15" viewBox="0 0 22 15"><ellipse cx="10.500" cy="6.800" rx="10.500" ry="6.800" fill="#fff"/><path d="M15 11 L20.500 14 L18 9 Z" fill="#fff"/><rect x="5.300" y="3.800" width="10" height="6.600" rx=".8" fill="#005e9c"/><rect x="11.800" y="2.800" width="2.600" height="1.500" fill="#005e9c"/><circle cx="10.800" cy="7.100" r="2.100" fill="#9fc3dc"/><circle cx="10.800" cy="7.100" r="1" fill="#005e9c"/></svg>
  <span class="abs" style="left:39px;top:7.500px;font-size:10.6px;line-height:13px;color:#fff;white-space:nowrap">Report an issue</span>
</div>
<div class="split" style="left:320px"><i></i></div>
<div class="split" style="left:807px"><i></i></div>

</body>
</html>
